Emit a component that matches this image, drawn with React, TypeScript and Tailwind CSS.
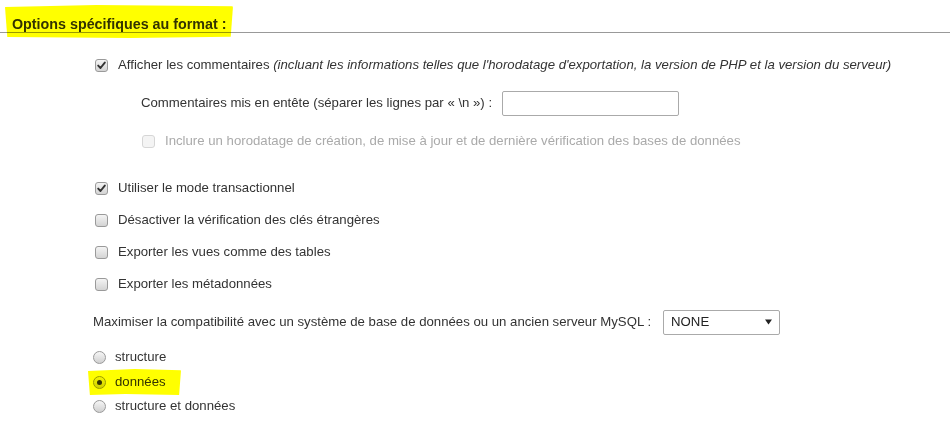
import React from "react";

const Check = ({ checked = false, disabled = false }: { checked?: boolean; disabled?: boolean }) => (
  <span
    className={`flex h-[13px] w-[13px] shrink-0 items-center justify-center rounded-[3px] border ${
      disabled
        ? "border-[#d6d6d6] bg-[#f4f4f4]"
        : "border-[#9a9a9a] bg-gradient-to-b from-[#f4f4f4] to-[#d4d4d4]"
    }`}
  >
    {checked && (
      <svg width="9" height="9" viewBox="0 0 9 9">
        <path d="M1.2 4.6 L3.5 7 L7.8 1.6" fill="none" stroke="#333" strokeWidth="1.9" strokeLinecap="round" strokeLinejoin="round" />
      </svg>
    )}
  </span>
);

const Radio = ({ checked = false }: { checked?: boolean }) => (
  <span className="flex h-[13px] w-[13px] shrink-0 items-center justify-center rounded-full border border-[#9a9a9a] bg-gradient-to-b from-[#f6f6f6] to-[#d0d0d0]">
    {checked && <span className="h-[5px] w-[5px] rounded-full bg-[#333]" />}
  </span>
);

const CheckRow = ({ label, checked, className }: { label: React.ReactNode; checked?: boolean; className: string }) => (
  <div className={`flex h-[24px] items-center gap-[10px] ${className}`}>
    <Check checked={checked} />
    <span>{label}</span>
  </div>
);

const RadioRow = ({ label, checked, className }: { label: string; checked?: boolean; className: string }) => (
  <div className={`flex h-[24px] items-center gap-[9px] ${className}`}>
    <Radio checked={checked} />
    <span>{label}</span>
  </div>
);

export default function App() {
  return (
    <div className="relative h-[446px] w-[950px] overflow-hidden bg-white font-['Liberation_Sans',Arial,sans-serif] text-[13.2px] text-[#333]">
      <div className="relative h-[33px] border-b border-[#999]">
        <h2 className="pl-[12px] pt-[16px] text-[14.3px] font-bold leading-[17px] text-[#333]">
          Options spécifiques au format :
        </h2>
        {/* marker highlight */}
        <div className="pointer-events-none absolute left-[5px] top-[5px] h-[33px] w-[228px] rounded-[3px] bg-[#ffff00] mix-blend-multiply [clip-path:polygon(0_6%,40%_0,100%_4%,99%_96%,55%_100%,1%_97%)]" />
      </div>

      <div className="flex flex-col pl-[95px]">
        <CheckRow
          className="mt-[20px]"
          checked
          label={
            <>
              Afficher les commentaires{" "}
              <i>(incluant les informations telles que l'horodatage d'exportation, la version de PHP et la version du serveur)</i>
            </>
          }
        />

        <div className="mt-[14px] flex h-[24px] items-center pl-[46px]">
          <span>Commentaires mis en entête (séparer les lignes par « \n ») :</span>
          <input
            type="text"
            className="ml-[10px] h-[25px] w-[177px] rounded-[2px] border border-[#aaa] bg-white outline-none"
          />
        </div>

        <div className="mt-[14px] flex h-[24px] items-center gap-[10px] pl-[47px] text-[#aaa]">
          <Check disabled />
          <span>Inclure un horodatage de création, de mise à jour et de dernière vérification des bases de données</span>
        </div>

        <CheckRow className="mt-[23px]" checked label="Utiliser le mode transactionnel" />
        <CheckRow className="mt-[8px]" label="Désactiver la vérification des clés étrangères" />
        <CheckRow className="mt-[8px]" label="Exporter les vues comme des tables" />
        <CheckRow className="mt-[8px]" label="Exporter les métadonnées" />

        <div className="-ml-[2px] mt-[14px] flex h-[24px] items-center">
          <span>Maximiser la compatibilité avec un système de base de données ou un ancien serveur MySQL :</span>
          <div className="ml-[12px] flex h-[25px] w-[117px] items-center justify-between rounded-[2px] border border-[#aaa] bg-white pl-[7px] pr-[7px] text-[#222]">
            <span>NONE</span>
            <svg width="7" height="6" viewBox="0 0 7 6">
              <path d="M0 0.5 H7 L3.5 5.5 Z" fill="#222" />
            </svg>
          </div>
        </div>

        <div className="-ml-[2px] flex flex-col">
          <RadioRow className="mt-[11px]" label="structure" />
          <div className="relative mt-[1px]">
            <RadioRow className="" checked label="données" />
            <div className="pointer-events-none absolute -left-[5px] -top-[1px] h-[26px] w-[93px] rounded-[2px] bg-[#ffff00] mix-blend-multiply [clip-path:polygon(0_8%,50%_0,100%_5%,98%_100%,40%_96%,2%_100%)]" />
          </div>
          <RadioRow className="" label="structure et données" />
        </div>
      </div>
    </div>
  );
}
